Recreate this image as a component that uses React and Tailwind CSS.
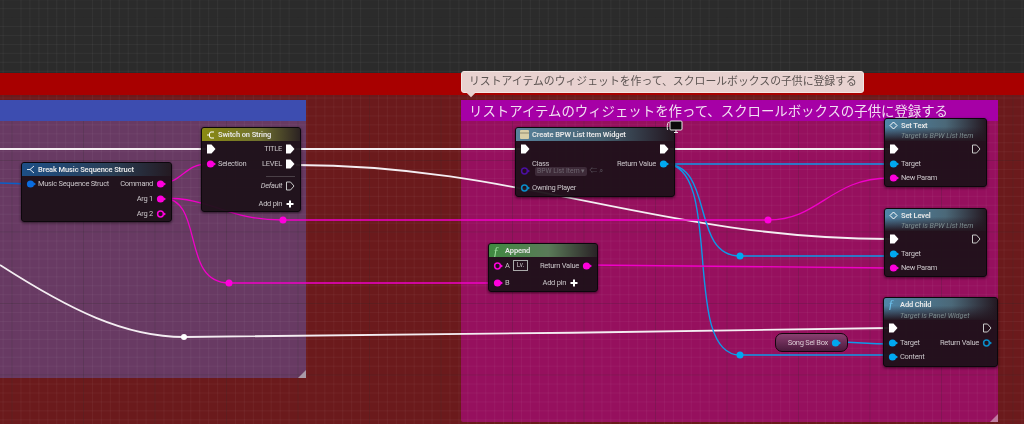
import React from 'react'

const font = 'font-["Roboto","Noto_Sans_CJK_JP",sans-serif]'

// exec arrow / data pin drawings
function Pin({ type = 'dot', color = '#ff00dc' }) {
  if (type === 'exec') {
    return (
      <svg width="10" height="10" viewBox="0 0 10 10" className="shrink-0">
        <path d="M1 .5H5.5L9.5 5L5.5 9.5H1Z" fill="#fff" />
      </svg>
    )
  }
  if (type === 'execOff') {
    return (
      <svg width="10" height="10" viewBox="0 0 10 10" className="shrink-0">
        <path d="M1.5 1H5.5L9 5L5.5 9H1.5Z" fill="none" stroke="#c8c8c8" strokeWidth="1" />
      </svg>
    )
  }
  if (type === 'ring') {
    return (
      <svg width="10" height="10" viewBox="0 0 10 10" className="shrink-0">
        <circle cx="4.5" cy="5" r="2.9" fill="none" stroke={color} strokeWidth="1.5" />
        <path d="M8 3.5L10 5L8 6.5Z" fill={color} />
      </svg>
    )
  }
  if (type === 'plus') {
    return (
      <svg width="10" height="10" viewBox="0 0 10 10" className="shrink-0">
        <path d="M5 1.5V8.5M1.5 5H8.5" stroke="#fff" strokeWidth="2" />
      </svg>
    )
  }
  return (
    <svg width="10" height="10" viewBox="0 0 10 10" className="shrink-0">
      <circle cx="4.5" cy="5" r="3.6" fill={color} />
      <path d="M8 3.5L10 5L8 6.5Z" fill={color} />
    </svg>
  )
}

function Row({ left, right, h = 'h-[15px]' }) {
  return (
    <div className={`flex items-center justify-between ${h}`}>
      <div className="flex items-center gap-[2px]">{left}</div>
      <div className="flex items-center gap-[3px]">{right}</div>
    </div>
  )
}

const Label = ({ children, className = '' }) => (
  <span className={`text-[7.5px] leading-none tracking-[-0.28px] whitespace-nowrap text-[#c9c4c8] ${className}`}>{children}</span>
)

function FuncIcon({ color }) {
  return <span className={`font-["Liberation_Serif",serif] italic text-[12px] leading-none w-[9px] ${color}`}>ƒ</span>
}

function Node({ className, header, headerTall, icon, title, sub, children }) {
  return (
    <div className={`absolute z-20 rounded-[3px] border border-[#0c070c] bg-[#1e1119]/95 shadow-[0_1px_3px_rgba(0,0,0,.6)] overflow-hidden ${className}`}>
      <div className={`flex flex-col justify-center px-[4px] ${header} ${headerTall ? 'h-[22px]' : 'h-[13px]'}`}>
        <div className="flex items-center gap-[3px]">
          {icon}
          <span className="text-[7.5px] leading-none tracking-[-0.12px] font-semibold text-[#e8e8e8] whitespace-nowrap">{title}</span>
        </div>
        {sub && <div className="pl-[12px] mt-[2px] text-[7.2px] leading-none italic text-[#7d8c8f] whitespace-nowrap">{sub}</div>}
      </div>
      <div className="pl-[4px] pr-[5px]">{children}</div>
    </div>
  )
}

const blueHead = 'bg-[linear-gradient(180deg,rgba(30,17,25,0)_35%,#241620_100%),linear-gradient(90deg,#4f86a8_0%,#4b6878_60%,#241821_100%)]'

function SetNode({ className, title }) {
  return (
    <Node
      className={className}
      header={blueHead}
      headerTall
      icon={<svg width="9" height="9" viewBox="0 0 9 9"><path d="M4.5 1L8 4.5L4.5 8L1 4.5Z" fill="none" stroke="#fff" strokeWidth="1" /></svg>}
      title={title}
      sub="Target is BPW List Item"
    >
      <Row left={<Pin type="exec" />} right={<Pin type="execOff" />} />
      <Row left={<><Pin color="#00a8f0" /><Label>Target</Label></>} />
      <Row h="h-[14px]" left={<><Pin /><Label>New Param</Label></>} />
    </Node>
  )
}

export default function App() {
  return (
    <div className={`relative flex flex-col w-[1024px] h-[424px] overflow-hidden bg-[#2b2b2b] blur-[0.3px] ${font}`}>
      {/* graph floor: dark strip, red bar, red floor */}
      <div className="h-[73px] shrink-0" />
      <div className="relative z-10 h-[22px] shrink-0 bg-[#a80000]" />
      <div className="flex-1 bg-[#6b1a1c]" />

      {/* comment boxes */}
      <div className="absolute left-0 top-[100px] w-[306px] h-[278px] bg-[#683a63]">
        <div className="relative z-10 h-[21px] bg-[#3d4db0]" />
      </div>
      <div className="absolute left-[461px] top-[100px] w-[537px] h-[322px] rounded-[2px] bg-[#96105e]">
        <div className="relative z-10 h-[21px] bg-[#a600a6] pl-[8px] text-[13.4px] leading-[23px] text-[#f2dff2] whitespace-nowrap">
          リストアイテムのウィジェットを作って、スクロールボックスの子供に登録する
        </div>
      </div>

      {/* grid lines */}
      <div className="absolute inset-0 pointer-events-none [background-image:linear-gradient(to_right,rgba(0,0,0,.16)_1px,transparent_1px),linear-gradient(to_bottom,rgba(0,0,0,.16)_1px,transparent_1px),linear-gradient(to_right,rgba(255,255,255,.04)_1px,transparent_1px),linear-gradient(to_bottom,rgba(255,255,255,.04)_1px,transparent_1px)] [background-size:71.5px_71.5px,71.5px_71.5px,8.94px_8.94px,8.94px_8.94px] [background-position:11.5px_17px,11.5px_17px,2.6px_8.2px,2.6px_8.2px]" />

      {/* tooltip of the comment */}
      <div className="absolute z-30 left-[461px] top-[71px] w-[403px] h-[22px] rounded-[3px] bg-[#e8d2d0] border border-[#f2e6e4] pl-[7px] text-[10.85px] leading-[20px] text-[#5c5452] whitespace-nowrap">
        リストアイテムのウィジェットを作って、スクロールボックスの子供に登録する
        <span className="absolute left-[6px] top-[18px] w-[6px] h-[6px] rotate-45 bg-[#e8d2d0]" />
      </div>

      {/* wires */}
      <svg className="absolute inset-0" width="1024" height="424" fill="none">
        <g stroke="#f4eef2" strokeWidth="1.8">
          <path d="M0 149H206" />
          <path d="M296 149H523" />
          <path d="M670 149H890" />
          <path d="M296 165C520 165 660 239 890 239" />
          <path d="M0 265C70 310 125 337 184 337C300 337 700 331 890 328" />
        </g>
        <g stroke="#0d9ae8" strokeWidth="1.4">
          <path d="M0 183C12 183 20 184 30 184" stroke="#0a5fc8" />
          <path d="M665 164H890" />
          <path d="M665 164C715 164 690 256 740 256H890" />
          <path d="M665 164C725 164 680 355 740 355H890" />
          <path d="M835 342C860 342 865 344 890 344" />
        </g>
        <g stroke="#f000c8" strokeWidth="1.3">
          <path d="M162 184C185 180 185 164 208 164" />
          <path d="M162 198C215 198 225 220 283 220H768C820 220 830 178 890 178" />
          <path d="M162 198C205 198 180 283 229 283H495" />
          <path d="M587 265L890 268" />
        </g>
        <circle cx="184" cy="337" r="3" fill="#fff" />
        <circle cx="283" cy="220" r="3.5" fill="#ff00dc" />
        <circle cx="229" cy="283" r="3.5" fill="#ff00dc" />
        <circle cx="768" cy="220" r="3.5" fill="#ff00dc" />
        <circle cx="740" cy="256" r="3.5" fill="#00a8f0" />
        <circle cx="740" cy="355" r="3.5" fill="#00a8f0" />
        {/* resize grips */}
        <path d="M306 370V378H298Z" fill="#a99aa8" />
        <path d="M998 414V422H990Z" fill="#c07aa0" />
      </svg>

      {/* nodes */}
      <Node
        className="left-[21px] top-[162px] w-[151px] h-[60px]"
        header="bg-[linear-gradient(90deg,#1d4f86_0%,#2a3f55_60%,#241a22_100%)]"
        icon={<svg width="9" height="9" viewBox="0 0 9 9"><path d="M1 4.5H4L8 1M4 4.5L8 8" fill="none" stroke="#dfe6ee" strokeWidth="1" /></svg>}
        title="Break Music Sequence Struct"
      >
        <Row left={<><Pin color="#0a6ce0" /><Label>Music Sequence Struct</Label></>} right={<><Label>Command</Label><Pin /></>} />
        <Row right={<><Label>Arg 1</Label><Pin /></>} />
        <Row right={<><Label>Arg 2</Label><Pin type="ring" /></>} />
      </Node>

      <Node
        className="left-[201px] top-[127px] w-[100px] h-[85px]"
        header="bg-[linear-gradient(90deg,#8a8a12_0%,#6f7030_60%,#2b2222_100%)]"
        icon={<svg width="9" height="10" viewBox="0 0 9 10"><path d="M1 5H3.5M8 2H5Q3.5 2 3.5 4V6Q3.5 8 5 8H8" fill="none" stroke="#fff" strokeWidth="1" /></svg>}
        title="Switch on String"
      >
        <Row left={<Pin type="exec" />} right={<><Label>TITLE</Label><Pin type="exec" /></>} />
        <Row left={<><Pin /><Label>Selection</Label></>} right={<><Label>LEVEL</Label><Pin type="exec" /></>} />
        <div className="h-px bg-[#4a4047] ml-[60px] mt-[5px]" />
        <Row h="h-[17px]" right={<><Label className="italic">Default</Label><Pin type="execOff" /></>} />
        <Row h="h-[19px]" right={<><Label>Add pin</Label><Pin type="plus" /></>} />
      </Node>

      <Node
        className="left-[515px] top-[127px] w-[160px] h-[70px]"
        header="bg-[linear-gradient(90deg,#57829c_0%,#45606f_55%,#231620_100%)]"
        icon={<svg width="9" height="9" viewBox="0 0 9 9"><rect width="9" height="9" rx="1" fill="#d8cfa8" /><path d="M0 3H9" stroke="#8f8a70" /></svg>}
        title="Create BPW List Item Widget"
      >
        <Row left={<Pin type="exec" />} right={<Pin type="exec" />} />
        <Row left={<><span className="w-[10px]" /><Label>Class</Label></>} right={<><Label>Return Value</Label><Pin color="#00a8f0" /></>} />
        <div className="flex items-center gap-[2px] h-[10px] -mt-[5px]">
          <Pin type="ring" color="#4b0fa0" />
          <span className="flex items-center rounded-[2px] bg-[#3d2a38] ml-[3px] px-[2px] h-[9px] text-[6.8px] leading-none text-[#6f6670] whitespace-nowrap">BPW List Item ▾</span>
          <span className="text-[8px] leading-none text-[#4f4650]">⇐ ⌕</span>
        </div>
        <Row h="h-[15px] mt-[4px]" left={<><Pin type="ring" color="#0a8cc8" /><Label>Owning Player</Label></>} />
      </Node>

      {/* latent clock + screen badge */}
      <svg className="absolute z-20 left-[666px] top-[120px]" width="17" height="14" viewBox="0 0 17 14">
        <rect x="4" y="1" width="12" height="9" rx="1" fill="#0b0b0b" stroke="#e8e8e8" />
        <path d="M8 12.5H12M10 10V12.5" stroke="#e8e8e8" />
        <path d="M2.5 2C1 4 1 7 1.5 10" stroke="#e8e8e8" fill="none" />
      </svg>

      <Node
        className="left-[488px] top-[243px] w-[110px] h-[49px]"
        header="bg-[linear-gradient(90deg,#3f8a40_0%,#5a7a58_55%,#2a2226_100%)]"
        icon={<FuncIcon color="text-[#9fe09f]" />}
        title="Append"
      >
        <Row h="h-[17px]" left={<><Pin type="ring" /><Label>A</Label><span className="border border-[#aaa] text-[6.5px] leading-none text-[#c9c4c8] px-[3px] py-[1px] ml-[1px]">Lv.</span></>} right={<><Label>Return Value</Label><Pin /></>} />
        <Row h="h-[17px]" left={<><Pin /><Label>B</Label></>} right={<><Label>Add pin</Label><Pin type="plus" /><span className="w-[10px]" /></>} />
      </Node>

      <SetNode className="left-[884px] top-[118px] w-[103px] h-[69px]" title="Set Text" />
      <SetNode className="left-[884px] top-[208px] w-[103px] h-[69px]" title="Set Level" />

      <Node
        className="left-[883px] top-[297px] w-[115px] h-[70px]"
        header={blueHead}
        headerTall
        icon={<FuncIcon color="text-[#6fc4f0]" />}
        title="Add Child"
        sub="Target is Panel Widget"
      >
        <Row left={<Pin type="exec" />} right={<Pin type="execOff" />} />
        <Row left={<><Pin color="#00a8f0" /><Label>Target</Label></>} right={<><Label>Return Value</Label><Pin type="ring" color="#0a8cc8" /></>} />
        <Row h="h-[14px]" left={<><Pin color="#00a8f0" /><Label>Content</Label></>} />
      </Node>

      <div className="absolute z-20 left-[775px] top-[333px] w-[73px] h-[19px] rounded-[7px] border border-[#14060e] bg-[linear-gradient(180deg,#8a3f70_0%,#4a1a3c_100%)] flex items-center justify-end gap-[3px] pr-[6px]">
        <Label className="text-[#d8c8d2]">Song Sel Box</Label>
        <Pin color="#00a8f0" />
      </div>
    </div>
  )
}
